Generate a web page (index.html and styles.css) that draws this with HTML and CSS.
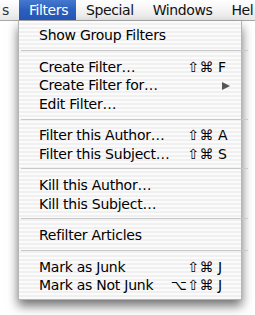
FILE: index.html
```html
<!DOCTYPE html>
<html lang="en">

<head>
    <meta charset="UTF-8">
    <title>Filters menu</title>
    <link rel="stylesheet" href="styles.css">
</head>

<body>

    <div class="menubar">
        <div class="bar-item first">s</div>
        <div class="bar-item active">Filters</div>
        <div class="bar-item">Special</div>
        <div class="bar-item">Windows</div>
        <div class="bar-item last">Hel</div>
    </div>

    <div class="menu">
        <div class="item"><span class="label">Show Group Filters</span></div>
        <div class="sep"></div>
        <div class="item"><span class="label">Create Filter…</span><span class="mods">⇧⌘</span><span class="key">F</span></div>
        <div class="item"><span class="label">Create Filter for…</span><span class="mods"></span><span class="key sub"><span class="arrow"></span></span></div>
        <div class="item"><span class="label">Edit Filter…</span></div>
        <div class="sep"></div>
        <div class="item"><span class="label">Filter this Author…</span><span class="mods">⇧⌘</span><span class="key">A</span></div>
        <div class="item"><span class="label">Filter this Subject…</span><span class="mods">⇧⌘</span><span class="key">S</span></div>
        <div class="sep"></div>
        <div class="item"><span class="label">Kill this Author…</span></div>
        <div class="item"><span class="label">Kill this Subject…</span></div>
        <div class="sep"></div>
        <div class="item"><span class="label">Refilter Articles</span></div>
        <div class="sep"></div>
        <div class="item"><span class="label">Mark as Junk</span><span class="mods">⇧⌘</span><span class="key">J</span></div>
        <div class="item"><span class="label">Mark as Not Junk</span><span class="mods">⌥⇧⌘</span><span class="key">J</span></div>
    </div>

</body>

</html>
```

FILE: styles.css
```css
* {
    box-sizing: border-box;
}

body {
    margin: 0;
    padding: 0;
    width: 255px;
    height: 315px;
    overflow: hidden;
    background-color: #ffffff;
    font-family: 'DejaVu Sans', sans-serif;
    font-size: 14px;
    letter-spacing: -0.25px;
    color: #000000;
}

.menubar {
    display: flex;
    height: 21px;
    white-space: nowrap;
    background: linear-gradient(to bottom, #ffffff, #f1f1f1 60%, #e6e6e6);
    border-bottom: 1px solid #a8a8a8;
}

.bar-item {
    padding: 0 9px 0 10px;
    line-height: 20px;
    color: #111111;
    letter-spacing: -0.4px;
}

.bar-item.first {
    padding: 0 10px 0 2px;
    color: #333333;
}

.bar-item.active {
    padding: 0 8px 0 10px;
    color: white;
    background: linear-gradient(to bottom, #4579cf, #2c5fbd 50%, #2455b6);
}

.bar-item.last {
    padding-right: 0;
}

.menu {
    width: 224px;
    margin-left: 18px;
    padding: 5.4px 11px 4.5px 20px;
    border: 1px solid #b4b4b4;
    border-top: none;
    background: repeating-linear-gradient(to bottom, #fbfbfb 0, #fbfbfb 2px, #f0f0f0 2px, #f0f0f0 4px);
    box-shadow: 0 6px 10px rgba(0, 0, 0, 0.55);
}

.item {
    display: grid;
    grid-template-columns: 1fr auto 12px;
    column-gap: 4px;
    height: 18.32px;
    line-height: 18.32px;
    white-space: nowrap;
}

.mods {
    text-align: right;
    letter-spacing: 0.5px;
}

.key {
    display: flex;
    align-items: center;
}

.key.sub {
    justify-content: flex-end;
}

.arrow {
    width: 0;
    height: 0;
    border-top: 4.5px solid transparent;
    border-bottom: 4.5px solid transparent;
    border-left: 8px solid #555555;
}

.sep {
    height: 1px;
    margin: 5.5px -18px 6.86px -18px;
    background-color: #c8c8c8;
}
```
